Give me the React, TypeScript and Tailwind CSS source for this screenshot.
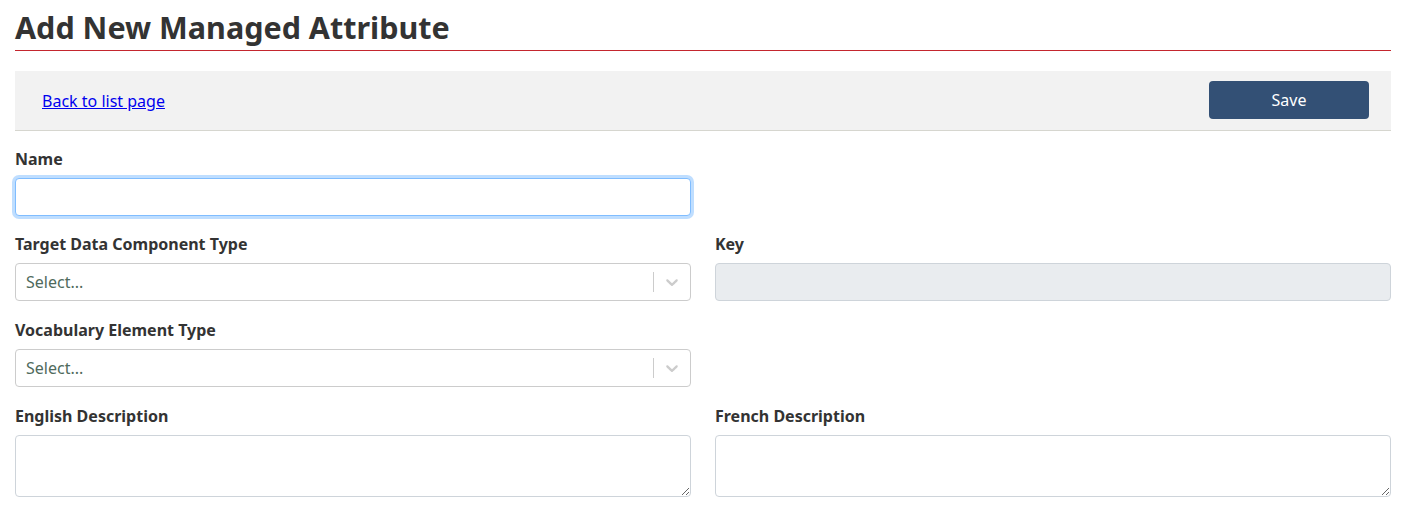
import React from "react";

function Chevron() {
  return (
    <svg width="20" height="20" viewBox="0 0 20 20" fill="#cccccc" aria-hidden="true">
      <path d="M4.516 7.548c0.436-0.446 1.043-0.481 1.576 0l3.908 3.747 3.908-3.747c0.533-0.481 1.141-0.446 1.574 0 0.436 0.445 0.408 1.197 0 1.615-0.406 0.418-4.695 4.502-4.695 4.502-0.217 0.223-0.502 0.335-0.787 0.335s-0.57-0.112-0.789-0.335c0 0-4.287-4.084-4.695-4.502s-0.436-1.17 0-1.615z" />
    </svg>
  );
}

function SelectBox() {
  return (
    <div className="flex h-[38px] items-center rounded-[4px] border border-[#cccccc] bg-white">
      <div className="flex-1 pl-[10px] text-[16px] text-[#4f6a5c]">Select...</div>
      <div className="flex items-center">
        <span className="h-[20px] w-px bg-[#cccccc]" />
        <span className="flex h-[36px] w-[36px] items-center justify-center">
          <Chevron />
        </span>
      </div>
    </div>
  );
}

function Label({ children }: { children: React.ReactNode }) {
  return <label className="mt-[1px] mb-[7px] block text-[16px] font-bold leading-[24px] text-[#333333]">{children}</label>;
}

export default function App() {
  return (
    <div className="min-h-[510px] bg-white px-[15px] pr-[14px] text-[#333333]" style={{ fontFamily: '"Noto Sans", sans-serif' }}>
      <h1 className="pt-[8px] pb-[3px] text-[30.5px] font-bold leading-[39px] text-[#333333]">
        Add New Managed Attribute
      </h1>
      <div className="h-px bg-[#c4262e]" />
      <div className="mt-[20px] flex h-[60px] items-start justify-between border-b border-[#d6d6cf] bg-[#f2f2f2] pt-[10px] pl-[27px] pr-[22px]">
        <a href="#" className="mt-[8px] text-[16px] leading-[24px] text-[#0000ee] underline">Back to list page</a>
        <button className="h-[38px] w-[160px] rounded-[4px] bg-[#335075] text-[16px] text-white">Save</button>
      </div>
      <div className="pt-[15px]">
        <div className="grid grid-cols-2 gap-x-[24px]">
          <div className="mb-[15px]">
            <Label>Name</Label>
            <input className="h-[38px] w-full rounded-[4px] border border-[#80bdff] bg-white px-3 outline-none shadow-[0_0_0_3px_rgba(0,123,255,0.25)]" />
          </div>
          <div />
          <div className="mb-[16px]">
            <Label>Target Data Component Type</Label>
            <SelectBox />
          </div>
          <div className="mb-[16px]">
            <Label>Key</Label>
            <input disabled className="h-[38px] w-full rounded-[4px] border border-[#ced4da] bg-[#e9ecef] px-3" />
          </div>
          <div className="mb-[16px]">
            <Label>Vocabulary Element Type</Label>
            <SelectBox />
          </div>
          <div />
          <div className="mb-[16px]">
            <Label>English Description</Label>
            <textarea className="block h-[62px] w-full rounded-[4px] border border-[#ced4da] bg-white px-3 outline-none" />
          </div>
          <div className="mb-[16px]">
            <Label>French Description</Label>
            <textarea className="block h-[62px] w-full rounded-[4px] border border-[#ced4da] bg-white px-3 outline-none" />
          </div>
        </div>
      </div>
    </div>
  );
}
